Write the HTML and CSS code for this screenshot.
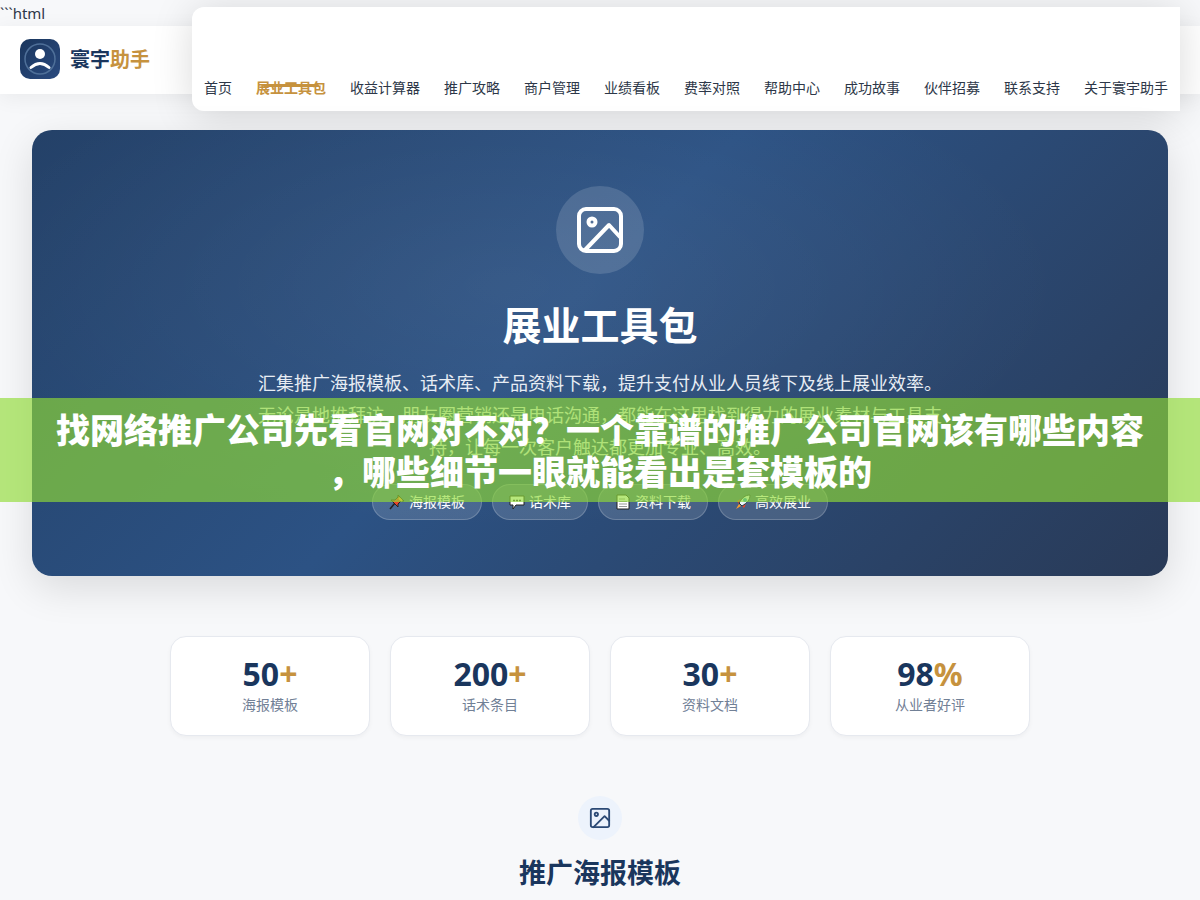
FILE: index.html
```html
<!DOCTYPE html>
<html lang="zh-CN">
  <head>
    <meta charset="UTF-8" />
    <meta name="viewport" content="width=device-width, initial-scale=1.0" />
    <title>展业工具包 - 寰宇助手</title>
    <link rel="stylesheet" href="styles.css">
  </head>
  <body>
    ```html
    <header class="header">
      <a href="#" class="logo">
        <svg class="logo-icon" viewBox="0 0 40 40">
          <defs>
            <linearGradient id="logoBg" x1="0" y1="0" x2="1" y2="1">
              <stop offset="0" stop-color="#1a365d" />
              <stop offset="1" stop-color="#2a4a7f" />
            </linearGradient>
          </defs>
          <rect width="40" height="40" rx="10" fill="url(#logoBg)" />
          <circle cx="20" cy="20" r="15" fill="none" stroke="#4f7099" stroke-width="1.5" />
          <circle cx="20" cy="15" r="5" fill="#fff" />
          <path d="M11 28.500Q20 20.500 29 28.500" fill="none" stroke="#fff" stroke-width="3" stroke-linecap="round" />
        </svg>
        <span class="logo-text">寰宇<span class="gold">助手</span></span>
      </a>
      <nav class="nav">
        <a href="#">首页</a>
        <a href="#" class="active">展业工具包</a>
        <a href="#">收益计算器</a>
        <a href="#">推广攻略</a>
        <a href="#">商户管理</a>
        <a href="#">业绩看板</a>
        <a href="#">费率对照</a>
        <a href="#">帮助中心</a>
        <a href="#">成功故事</a>
        <a href="#">伙伴招募</a>
        <a href="#">联系支持</a>
        <a href="#">关于寰宇助手</a>
      </nav>
    </header>

    <main>
      <section class="hero">
        <div class="hero-icon">
          <svg viewBox="0 0 48 48" fill="none" stroke="#fff" stroke-width="4" stroke-linecap="round" stroke-linejoin="round">
            <rect x="3" y="3" width="42" height="42" rx="7" />
            <circle cx="16" cy="16" r="3.500" />
            <path d="M44 31L33 19 9 44" />
          </svg>
        </div>
        <h1>展业工具包</h1>
        <p>汇集推广海报模板、话术库、产品资料下载，提升支付从业人员线下及线上展业效率。<br>无论是地推拜访、朋友圈营销还是电话沟通，都能在这里找到得力的展业素材与工具支持，让每一次客户触达都更加专业、高效。</p>
        <div class="tags">
          <span class="tag">
            <svg viewBox="0 0 16 16">
              <path d="M1 15L6 9" stroke="#222" stroke-width="1.500" />
              <path d="M9 1l6 6-3 0-3 3 0 3-7-7 4 0 3-3z" fill="#e8452c" stroke="#222" />
              <path d="M10 4l3 3" stroke="#ffb04a" stroke-width="2" />
            </svg>
            海报模板
          </span>
          <span class="tag">
            <svg viewBox="0 0 16 16">
              <path d="M1 2h14v9H7l-3 4v-4H1z" fill="#fff" stroke="#222" />
              <path d="M4 6.500h2M7 6.500h2M10 6.500h2" stroke="#333" stroke-width="1.500" />
            </svg>
            话术库
          </span>
          <span class="tag">
            <svg viewBox="0 0 16 16">
              <path d="M2 1h9l3 3v11H2z" fill="#fff" stroke="#222" />
              <path d="M4 5h6M4 7.500h8M4 10h8M4 12.500h8" stroke="#999" />
            </svg>
            资料下载
          </span>
          <span class="tag">
            <svg viewBox="0 0 16 16">
              <path d="M6 5L2 7l2 3zM11 10l-2 4-2-2z" fill="#e8452c" />
              <path d="M15 1c-5 0-8 3-11 8l3 3c5-3 8-6 8-11z" fill="#e9f5f8" stroke="#234" />
              <circle cx="10" cy="6" r="2" fill="#2a9ad0" />
              <path d="M4 10l-3 5 5-3z" fill="#ff9e2c" />
            </svg>
            高效展业
          </span>
        </div>
      </section>

      <section class="stats">
        <div class="stat">
          <div class="number">50<span class="gold">+</span></div>
          <div class="label">海报模板</div>
        </div>
        <div class="stat">
          <div class="number">200<span class="gold">+</span></div>
          <div class="label">话术条目</div>
        </div>
        <div class="stat">
          <div class="number">30<span class="gold">+</span></div>
          <div class="label">资料文档</div>
        </div>
        <div class="stat">
          <div class="number">98<span class="gold">%</span></div>
          <div class="label">从业者好评</div>
        </div>
      </section>

      <section class="section-head">
        <div class="section-icon">
          <svg viewBox="0 0 24 24" fill="none" stroke="#2c4a75" stroke-width="2" stroke-linecap="round" stroke-linejoin="round">
            <rect x="2" y="2" width="20" height="20" rx="2" />
            <circle cx="8" cy="8" r="1.800" />
            <path d="M22 15l-5-5L5 22" />
          </svg>
        </div>
        <h2>推广海报模板</h2>
      </section>
    </main>

    <div class="banner">找网络推广公司先看官网对不对？一个靠谱的推广公司官网该有哪些内容<br>，哪些细节一眼就能看出是套模板的</div>
  </body>
</html>
```

FILE: styles.css
```css
* {
  box-sizing: border-box;
}
body {
  margin: 0;
  font-family: "Noto Sans", "Noto Sans CJK SC", sans-serif;
  font-size: 15px;
  line-height: 26px;
  color: #2d3748;
  background: #f7f8fa;
  overflow-x: hidden;
}
a {
  color: inherit;
  text-decoration: none;
}
h1,
h2,
p {
  margin: 0;
}
.gold {
  color: #c6923e;
}

/* header */
.header {
  position: relative;
  display: flex;
  align-items: center;
  height: 68px;
  padding: 0 20px 2px;
  background: #fff;
  box-shadow: 0 4px 20px rgba(0, 0, 0, 0.06);
}
.logo {
  display: flex;
  align-items: center;
  gap: 10px;
}
.logo-icon {
  width: 40px;
  height: 40px;
}
.logo-text {
  padding-top: 2px;
  font-size: 20px;
  font-weight: 700;
  color: #1a365d;
}
/* the menu panel hangs over the header */
.nav {
  position: absolute;
  top: -19px;
  right: 20px;
  display: flex;
  gap: 24px;
  padding: 68px 12px 10px;
  background: #fff;
  border-radius: 12px 0 0 12px;
  box-shadow: 0 4px 40px rgba(0, 0, 0, 0.15);
  font-size: 14px;
  white-space: nowrap;
}
.nav a.active {
  position: relative;
  font-weight: 600;
  color: #c6923e;
}
.nav a.active::after {
  content: "";
  position: absolute;
  left: 10%;
  right: 10%;
  top: 9px;
  height: 3px;
  border-radius: 2px;
  background: #c6923e;
}

/* hero */
.hero {
  position: relative;
  display: flex;
  flex-direction: column;
  align-items: center;
  margin: 36px 32px 60px;
  padding: 56px 32px;
  border-radius: 20px;
  background:
    radial-gradient(ellipse at 42% 35%, rgba(255, 255, 255, 0.06), transparent 60%),
    linear-gradient(135deg, #244168 0%, #2c5284 45%, #293a57 100%);
  box-shadow: 0 12px 40px rgba(0, 0, 0, 0.12);
  color: #fff;
  text-align: center;
}
.hero-icon {
  display: flex;
  align-items: center;
  justify-content: center;
  width: 88px;
  height: 88px;
  border-radius: 50%;
  background: rgba(255, 255, 255, 0.14);
}
.hero-icon svg {
  width: 48px;
  height: 48px;
}
.hero h1 {
  margin: 26px 0 17px;
  font-size: 39px;
  line-height: 50px;
  font-weight: 700;
}
.hero p {
  max-width: 700px;
  font-size: 18px;
  line-height: 32px;
  color: #e8edf4;
}
.tags {
  display: flex;
  gap: 10px;
  margin-top: 21px;
}
.tag {
  display: flex;
  align-items: center;
  gap: 4px;
  height: 36px;
  padding: 0 16px;
  border: 1px solid rgba(255, 255, 255, 0.2);
  border-radius: 18px;
  background: rgba(255, 255, 255, 0.14);
  font-size: 14px;
}
.tag svg {
  width: 16px;
  height: 16px;
  fill: none;
}

/* stats */
.stats {
  display: grid;
  grid-template-columns: repeat(4, 1fr);
  gap: 20px;
  max-width: 860px;
  margin: 0 auto 60px;
}
.stat {
  padding: 18px 10px;
  border: 1px solid #e6e9ef;
  border-radius: 16px;
  background: #fff;
  box-shadow: 0 2px 4px rgba(0, 0, 0, 0.04);
  text-align: center;
}
.number {
  font-size: 32px;
  line-height: 38px;
  font-weight: 700;
  color: #1a365d;
}
.label {
  font-size: 14px;
  line-height: 24px;
  color: #718096;
}

/* section title */
.section-head {
  display: flex;
  flex-direction: column;
  align-items: center;
}
.section-icon {
  display: flex;
  align-items: center;
  justify-content: center;
  width: 44px;
  height: 44px;
  border-radius: 50%;
  background: #edf3fc;
}
.section-icon svg {
  width: 22px;
  height: 22px;
}
.section-head h2 {
  margin-top: 12px;
  font-size: 27px;
  line-height: 42px;
  font-weight: 700;
  color: #1a365d;
}

/* headline strip over the page */
.banner {
  position: absolute;
  top: 398px;
  left: 0;
  right: 0;
  padding: 10px 0;
  background: rgba(144, 220, 54, 0.65);
  font-family: "Noto Sans CJK SC", sans-serif;
  font-size: 34px;
  line-height: 42px;
  font-weight: 900;
  color: #fff;
  text-align: center;
}
```
